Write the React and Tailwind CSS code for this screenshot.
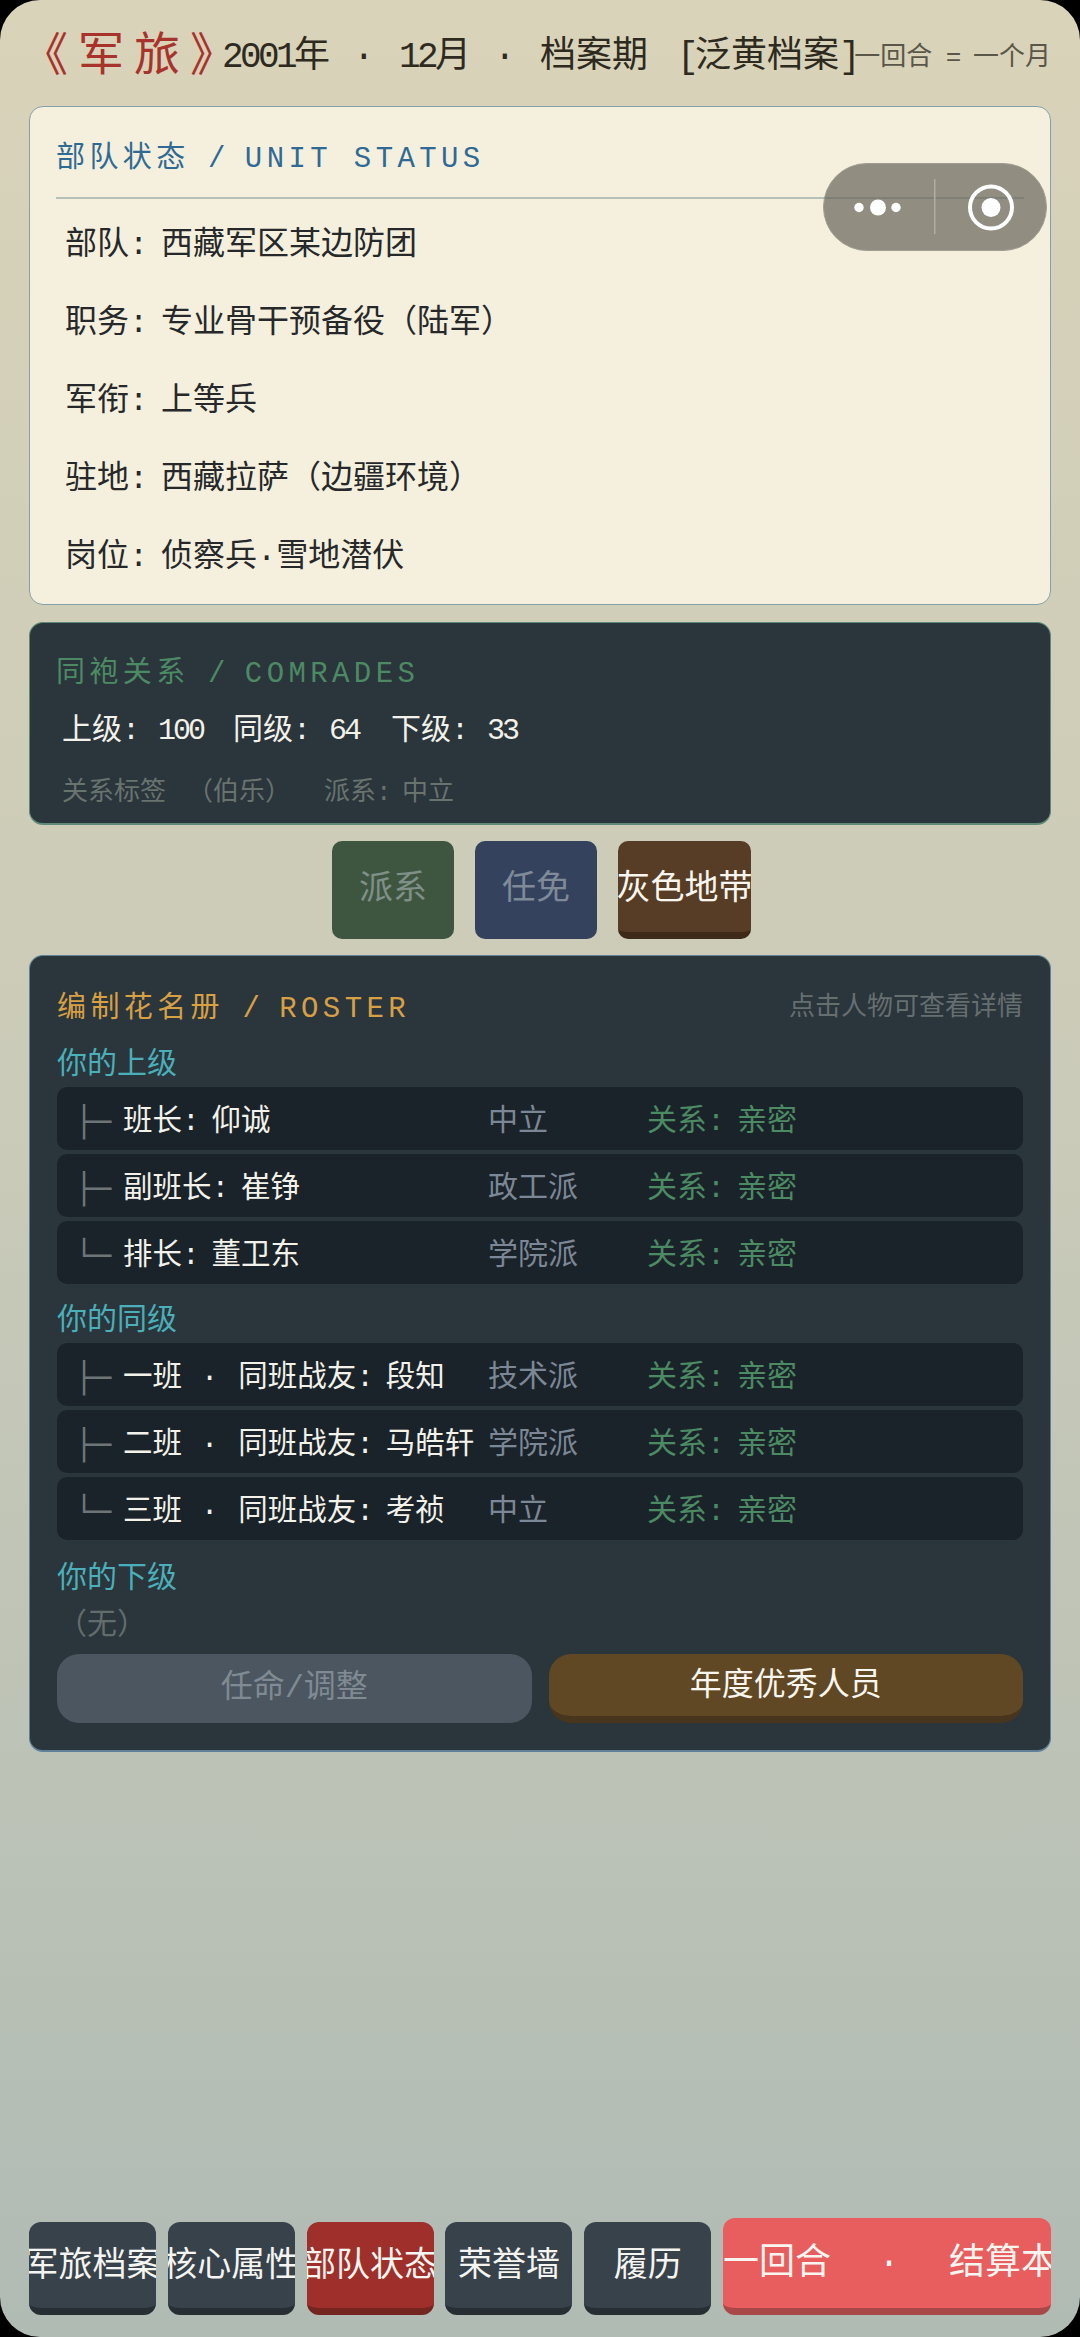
const FONT = "font-['Liberation_Mono','Noto_Sans_CJK_SC',monospace]";

function N({ children }) {
  return <span className="tracking-[-0.1em]">{children}</span>;
}

function C() {
  return <span className="inline-block w-[1em]">:</span>;
}

function Row({ glyph, name, faction }) {
  return (
    <div className="flex h-[63px] items-center rounded-[10px] bg-[#1a2329] pl-[18px] pt-[6px] text-[30px] leading-[40px] whitespace-pre">
      <span className="w-[48px] font-['DejaVu_Sans_Mono',monospace] text-[#6d7578]">{glyph}</span>
      <span className="w-[365px] text-[29.5px] text-[#f2f2ea]">{name}</span>
      <span className="w-[159px] text-[#7c8796]">{faction}</span>
      <span className="text-[#4c8a64]">关系<C />亲密</span>
    </div>
  );
}

function Group({ children }) {
  return <div className="flex flex-col gap-[4px]">{children}</div>;
}

function Label({ children, className = "" }) {
  return <div className={`h-[40px] text-[30px] leading-[46px] text-[#4aafb8] ${className}`}>{children}</div>;
}

function Dot() {
  return <span className="tracking-[1px]"> · </span>;
}

function Sep() {
  return <span className="tracking-[1px]"> / </span>;
}

function NavBtn({ label, active }) {
  return (
    <div
      className={
        "flex h-[93px] w-[127px] shrink-0 items-center justify-center overflow-hidden rounded-[12px] border-b-[7px] pt-[3px] text-[34px] leading-none whitespace-nowrap text-[#f4f4f0] " +
        (active ? "border-[#752520] bg-[#9e2f2a]" : "border-[#272f35] bg-[#38424b]")
      }
    >
      {label}
    </div>
  );
}

function InfoRow({ children }) {
  return <div className="flex h-[78px] items-center pt-[7px]">{children}</div>;
}

export default function App() {
  return (
    <div className={`relative h-[2337px] w-[1080px] overflow-hidden bg-black ${FONT}`}>
      <div className="flex h-full flex-col rounded-[40px] bg-gradient-to-b from-[#d9d3b9] via-[#c9cab8] to-[#b0bbb4] px-[29px] pb-[22px]">
        {/* header */}
        <div className="flex h-[106px] shrink-0 items-center pt-[10px] whitespace-pre text-[#2e2a20]">
          <span className="-ml-[7px] w-[200px] text-[46px] leading-none tracking-[10px] text-[#a8322c]">
            《军旅<span className="tracking-[-16px]">》</span>
          </span>
          <span className="text-[36px] leading-none">
            <N>2001</N>年<span className="tracking-[1.4px]"> · </span><N>12</N>月<span className="tracking-[1.4px]"> · </span>档案期<span className="inline-block w-[29px]"></span><N>[</N>泛黄档案<span className="tracking-[-0.18em]">]</span>
          </span>
          <span className="text-[26px] leading-none text-[#5a5648]">一回合<span className="tracking-[-2px]"> = </span>一个月</span>
        </div>

        {/* unit status */}
        <div className="h-[499px] shrink-0 rounded-[14px] border border-[#86a0a8] bg-[#f5f0dd] px-[26px] pt-[30px]">
          <div className="h-[62px] border-b-2 border-[#b4c0b8] text-[29px] leading-[46px] tracking-[4.4px] whitespace-pre text-[#2f6a94]">
            部队状态<Sep />UNIT STATUS
          </div>
          <div className="mt-[4px] flex flex-col pl-[9px] text-[32px] text-[#26282a]">
            <InfoRow>部队<C />西藏军区某边防团</InfoRow>
            <InfoRow>职务<C />专业骨干预备役（陆军）</InfoRow>
            <InfoRow>军衔<C />上等兵</InfoRow>
            <InfoRow>驻地<C />西藏拉萨（边疆环境）</InfoRow>
            <InfoRow>岗位<C />侦察兵·雪地潜伏</InfoRow>
          </div>
        </div>

        {/* comrades */}
        <div className="mt-[17px] h-[203px] shrink-0 rounded-[14px] border border-b-2 border-[#5f8a78] bg-[#2b353c] px-[26px] pt-[29px]">
          <div className="h-[40px] text-[29px] leading-[46px] tracking-[4.4px] whitespace-pre text-[#4c8a64]">同袍关系<Sep />COMRADES</div>
          <div className="mt-[16px] flex h-[40px] pl-[6px] text-[30px] leading-[46px] whitespace-pre text-[#f2f2ea]">
            <span className="w-[171px]">上级<C /><span className="ml-[6px]"><N>100</N></span></span>
            <span className="w-[158px]">同级<C /><span className="ml-[6px]"><N>64</N></span></span>
            <span>下级<C /><span className="ml-[6px]"><N>33</N></span></span>
          </div>
          <div className="mt-[22px] flex h-[40px] pl-[6px] text-[26px] leading-[46px] whitespace-pre text-[#68736f]">
            <span className="mr-[21px]">关系标签</span>
            <span className="mr-[33px]">（伯乐）</span>
            <span>派系<C />中立</span>
          </div>
        </div>

        {/* action buttons */}
        <div className="mt-[16px] flex h-[98px] shrink-0 justify-center gap-[21px] pl-[3px] text-[34px] leading-none">
          <div className="flex w-[122px] items-center justify-center rounded-[10px] bg-[#3e5640] text-[#7f9088]">派系</div>
          <div className="flex w-[122px] items-center justify-center rounded-[10px] bg-[#34425e] text-[#7f8a99]">任免</div>
          <div className="flex w-[133px] items-center justify-center overflow-hidden rounded-[10px] border-b-[7px] border-[#3e2a18] bg-[#573d26] pt-[7px] whitespace-nowrap text-[#f8f6ee]">灰色地带</div>
        </div>

        {/* roster */}
        <div className="mt-[16px] h-[797px] shrink-0 rounded-[14px] border border-b-2 border-[#5f8096] bg-[#2b353c] px-[27px] pt-[31px]">
          <div className="flex h-[40px] items-start justify-between leading-[46px]">
            <span className="text-[29px] tracking-[4.4px] whitespace-pre text-[#d7a045]">编制花名册<Sep />ROSTER</span>
            <span className="text-[26px] leading-[42px] text-[#666f70]">点击人物可查看详情</span>
          </div>
          <Label className="mt-[15px] mb-[5px]">你的上级</Label>
          <Group>
            <Row glyph="├─" name={<>班长<C />仰诚</>} faction="中立" />
            <Row glyph="├─" name={<>副班长<C />崔铮</>} faction="政工派" />
            <Row glyph="└─" name={<>排长<C />董卫东</>} faction="学院派" />
          </Group>
          <Label className="mt-[14px] mb-[5px]">你的同级</Label>
          <Group>
            <Row glyph="├─" name={<>一班<Dot />同班战友<C />段知</>} faction="技术派" />
            <Row glyph="├─" name={<>二班<Dot />同班战友<C />马皓轩</>} faction="学院派" />
            <Row glyph="└─" name={<>三班<Dot />同班战友<C />考祯</>} faction="中立" />
          </Group>
          <Label className="mt-[16px]">你的下级</Label>
          <div className="mt-[7px] h-[40px] text-[30px] leading-[46px] text-[#636c6d]">（无）</div>
          <div className="mt-[11px] flex h-[69px] gap-[17px] text-[32px] leading-none">
            <div className="flex flex-1 items-center justify-center rounded-[22px] bg-[#4c5660] text-[#7f8a92]">任命/调整</div>
            <div className="flex flex-1 items-center justify-center rounded-[22px] border-b-[7px] border-[#47351d] bg-[#604824] pt-[3px] text-[#f8f6ee]">年度优秀人员</div>
          </div>
        </div>

        <div className="flex-1" />

        {/* bottom nav */}
        <div className="flex h-[97px] shrink-0 items-end justify-between">
          <NavBtn label="军旅档案" />
          <NavBtn label="核心属性" />
          <NavBtn label="部队状态" active />
          <NavBtn label="荣誉墙" />
          <NavBtn label="履历" />
          <div className="flex h-[97px] w-[328px] shrink-0 items-center overflow-hidden rounded-[12px] border-b-[7px] border-[#a84848] bg-[#e85d5d] pt-[4px] text-[36px] leading-none whitespace-pre text-[#f8f4f0]">
            一回合<span className="tracking-[2px]">  ·  </span>结算本
          </div>
        </div>
      </div>

      {/* WeChat capsule */}
      <div className="absolute left-[823px] top-[163px] flex h-[88px] w-[224px] items-center rounded-[44px] border border-[#a09e90] bg-[#66645a]/70">
        <svg width="224" height="88" viewBox="0 0 224 88" fill="white" className="shrink-0">
          <circle cx="35" cy="44.5" r="4.7" />
          <circle cx="54" cy="44.5" r="8" />
          <circle cx="72" cy="44.5" r="4.7" />
          <rect x="110" y="16" width="1.5" height="55" fill="#b0ae9f" />
          <circle cx="167" cy="44.5" r="21" fill="none" stroke="white" strokeWidth="4" />
          <circle cx="167" cy="44.5" r="9.5" />
        </svg>
      </div>
    </div>
  );
}
